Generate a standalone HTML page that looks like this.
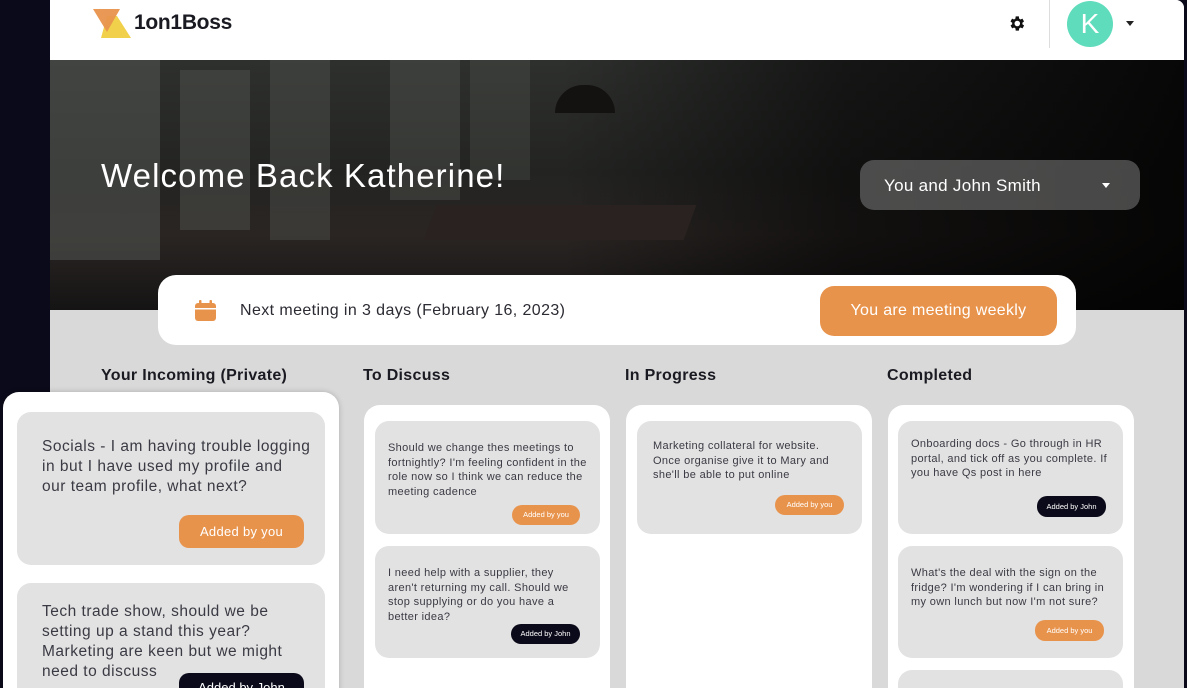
<!DOCTYPE html>
<html><head><meta charset="utf-8"><style>
*{box-sizing:border-box;margin:0;padding:0}
html,body{width:1187px;height:688px;overflow:hidden}
body{background:#0b0a1a;font-family:"Liberation Sans",sans-serif;position:relative;color:#2b2b33}
.main{position:absolute;left:50px;top:0;width:1134px;height:688px;background:#d9d9d9;border-top-right-radius:8px;overflow:hidden}
.hdr{position:absolute;left:0;top:0;width:1134px;height:60px;background:#fff}
.hero{position:absolute;left:0;top:60px;width:1134px;height:250px;overflow:hidden;background:
linear-gradient(90deg,rgba(0,0,0,0),rgba(0,0,0,0) 45%,rgba(0,0,0,.55) 70%,rgba(0,0,0,.85)),
linear-gradient(180deg,#2e302e 0%,#232422 45%,#2a2523 70%,#151414 100%)}
.abs{position:absolute}
.col-t{position:absolute;top:367px;font-weight:bold;font-size:16px;color:#1a1a22;letter-spacing:.3px}
.panel{position:absolute;background:#fff;border-radius:16px}
.card{position:absolute;background:#e2e2e2;border-radius:14px;font-size:11px;line-height:14.5px;color:#3a3a44;letter-spacing:.35px}
.pill{position:absolute;border-radius:10px;color:#fff;font-size:7.5px;text-align:center}
.o{background:#e8934c}.d{background:#0b0a1a}
.win{position:absolute;background:#4f524e}
</style></head><body>
<div class="main">
 <div class="hdr">
  <svg class="abs" style="left:43px;top:8px" width="40" height="30" viewBox="0 0 40 30"><polygon points="14,8 24,8 38,30 8,30" fill="#f1d14b"/><polygon points="0,1 27,1 14,24" fill="#e8934c" opacity=".95"/></svg>
  <div class="abs" style="left:84px;top:11px;font-size:21px;font-weight:bold;color:#1a1a22;letter-spacing:-.3px">1on1Boss</div>
  <svg class="abs" style="left:957px;top:14px" width="19" height="19" viewBox="0 0 24 24"><path fill="#111" d="M19.4 13a7.5 7.5 0 0 0 0-2l2.1-1.6-2-3.5-2.5 1a7 7 0 0 0-1.7-1L15 3h-4l-.4 2.9a7 7 0 0 0-1.7 1l-2.5-1-2 3.5L6.6 11a7.5 7.5 0 0 0 0 2l-2.1 1.6 2 3.5 2.5-1a7 7 0 0 0 1.7 1L11 21h4l.4-2.9a7 7 0 0 0 1.7-1l2.5 1 2-3.5zM13 15.5a3.5 3.5 0 1 1 0-7 3.5 3.5 0 0 1 0 7z"/></svg>
  <div class="abs" style="left:999px;top:0;width:1px;height:48px;background:#ddd"></div>
  <div class="abs" style="left:1017px;top:1px;width:46px;height:46px;border-radius:50%;background:#5fdcbc;color:#fff;font-size:28px;text-align:center;line-height:46px">K</div>
  <div class="abs" style="left:1076px;top:21px;border:4px solid transparent;border-top:5px solid #222"></div>
 </div>
 <div class="hero">
  <div class="win" style="left:0;top:0;width:110px;height:200px;opacity:.6"></div>
  <div class="win" style="left:130px;top:10px;width:70px;height:160px;opacity:.5"></div>
  <div class="win" style="left:220px;top:0;width:60px;height:180px;opacity:.45"></div>
  <div class="win" style="left:340px;top:0;width:70px;height:140px;opacity:.45"></div>
  <div class="win" style="left:420px;top:0;width:60px;height:120px;opacity:.35"></div>
  <div class="abs" style="left:505px;top:25px;width:60px;height:28px;background:#141210;border-radius:30px 30px 0 0"></div>
  <div class="abs" style="left:380px;top:145px;width:260px;height:35px;background:#2a2220;transform:skewX(-20deg)"></div>
  <div class="abs" style="left:51px;top:97px;font-size:33px;color:#fff;letter-spacing:1.1px">Welcome Back Katherine!</div>
  <div class="abs" style="left:810px;top:100px;width:280px;height:50px;border-radius:14px;background:rgba(150,150,150,.45)"></div>
  <div class="abs" style="left:834px;top:116px;font-size:17px;color:#fff;letter-spacing:.3px">You and John Smith</div>
  <div class="abs" style="left:1052px;top:123px;border:4px solid transparent;border-top:5px solid #fff"></div>
 </div>
 <div class="abs" style="left:108px;top:275px;width:918px;height:70px;background:#fff;border-radius:18px"></div>
 <svg class="abs" style="left:145px;top:300px" width="21" height="21" viewBox="0 0 21 21"><rect x="0" y="3" width="21" height="18" rx="3" fill="#e8934c"/><rect x="0" y="8" width="21" height="1.5" fill="#fff"/><rect x="4" y="0" width="2.5" height="6" rx="1" fill="#e8934c"/><rect x="14.5" y="0" width="2.5" height="6" rx="1" fill="#e8934c"/></svg>
 <div class="abs" style="left:190px;top:302px;font-size:16px;color:#2b2b33;letter-spacing:.4px">Next meeting in 3 days (February 16, 2023)</div>
 <div class="abs" style="left:770px;top:286px;width:237px;height:50px;background:#e8934c;border-radius:14px;color:#fff;font-size:16px;text-align:center;line-height:50px;letter-spacing:.3px">You are meeting weekly</div>
 <div class="col-t" style="left:51px">Your Incoming (Private)</div>
 <div class="col-t" style="left:313px">To Discuss</div>
 <div class="col-t" style="left:575px">In Progress</div>
 <div class="col-t" style="left:837px">Completed</div>
 <div class="panel" style="left:314px;top:405px;width:246px;height:300px"></div>
 <div class="panel" style="left:576px;top:405px;width:246px;height:300px"></div>
 <div class="panel" style="left:838px;top:405px;width:246px;height:300px"></div>
 <div class="card" style="left:325px;top:421px;width:225px;height:113px;padding:20px 8px 0 13px">Should we change thes meetings to fortnightly? I'm feeling confident in the role now so I think we can reduce the meeting cadence</div>
 <div class="pill o" style="left:462px;top:505px;width:68px;height:20px;line-height:20px">Added by you</div>
 <div class="card" style="left:325px;top:546px;width:225px;height:112px;padding:20px 20px 0 13px">I need help with a supplier, they aren't returning my call. Should we stop supplying or do you have a better idea?</div>
 <div class="pill d" style="left:461px;top:624px;width:69px;height:20px;line-height:20px">Added by John</div>
 <div class="card" style="left:587px;top:421px;width:225px;height:113px;padding:18px 20px 0 16px">Marketing collateral for website. Once organise give it to Mary and she'll be able to put online</div>
 <div class="pill o" style="left:725px;top:495px;width:69px;height:20px;line-height:20px">Added by you</div>
 <div class="card" style="left:848px;top:421px;width:225px;height:113px;padding:16px 14px 0 13px">Onboarding docs - Go through in HR portal, and tick off as you complete. If you have Qs post in here</div>
 <div class="pill d" style="left:987px;top:496px;width:69px;height:21px;line-height:21px">Added by John</div>
 <div class="card" style="left:848px;top:546px;width:225px;height:112px;padding:20px 14px 0 13px">What's the deal with the sign on the fridge? I'm wondering if I can bring in my own lunch but now I'm not sure?</div>
 <div class="pill o" style="left:985px;top:620px;width:69px;height:21px;line-height:21px">Added by you</div>
 <div class="card" style="left:848px;top:670px;width:225px;height:40px"></div>
</div>
<div class="abs" style="left:3px;top:392px;width:336px;height:320px;background:#fff;border-radius:16px;box-shadow:0 0 6px rgba(0,0,0,.2)"></div>
<div class="card" style="left:17px;top:412px;width:308px;height:153px;padding:25px 14px 0 25px;font-size:15.5px;line-height:20px;letter-spacing:.5px">Socials - I am having trouble logging in but I have used my profile and our team profile, what next?</div>
<div class="pill o" style="left:179px;top:515px;width:125px;height:33px;line-height:33px;font-size:13px;border-radius:10px;letter-spacing:.3px">Added by you</div>
<div class="card" style="left:17px;top:583px;width:308px;height:130px;padding:19px 14px 0 25px;font-size:15.5px;line-height:20px;letter-spacing:.5px">Tech trade show, should we be setting up a stand this year? Marketing are keen but we might need to discuss</div>
<div class="pill d" style="left:179px;top:673px;width:125px;height:33px;line-height:30px;font-size:13px;border-radius:10px">Added by John</div>
</body></html>
